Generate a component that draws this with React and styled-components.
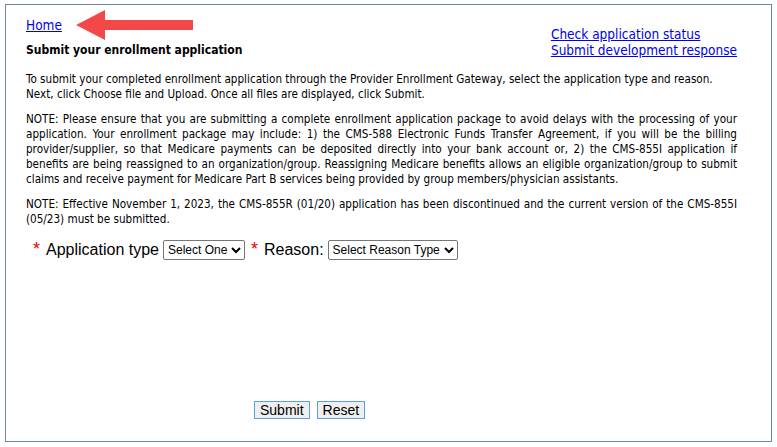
import React from 'react';
import styled, { createGlobalStyle } from 'styled-components';

const GlobalStyle = createGlobalStyle`
    body {
        margin: 0;
        background: #ffffff;
        font-family: "DejaVu Sans Condensed", "DejaVu Sans", sans-serif;
    }
`;

const Panel = styled.div`
    box-sizing: border-box;
    margin: 4px 5px 0 5px;
    height: 438px;
    border: 1px solid #6c8a9b;
    padding: 11px 34px 0 20px;
    display: flex;
    flex-direction: column;
`;

const Header = styled.div`
    display: flex;
    justify-content: space-between;
    align-items: flex-start;
`;

const LeftHead = styled.div`
    display: flex;
    flex-direction: column;
`;

const HomeRow = styled.div`
    display: flex;
    align-items: center;
    gap: 14px;
    height: 18px;
`;

const Link = styled.a`
    color: #0000ee;
    text-decoration: underline;
    font-size: 13.5px;
    line-height: 16px;
    cursor: pointer;
`;

const Title = styled.div`
    margin-top: 9px;
    font-size: 12px;
    font-weight: bold;
    color: #000;
`;

const RightLinks = styled.div`
    display: flex;
    flex-direction: column;
    margin-top: 10px;
`;

const Paragraph = styled.div`
    margin-top: ${p => p.$top}px;
    font-size: 11.6px;
    line-height: 15px;
    color: #000;
`;

const Line = styled.span`
    display: block;
    white-space: nowrap;
    text-align: justify;
    text-align-last: ${p => (p.$last ? 'left' : 'justify')};
`;

const FormRow = styled.div`
    margin-top: 12px;
    padding-left: 7px;
    display: flex;
    align-items: center;
    font-family: "Liberation Sans", Arial, sans-serif;
    font-size: 16px;
    color: #000;
`;

const Star = styled.span`
    color: #ee0000;
    font-size: 18px;
    margin-right: 6px;
`;

const Select = styled.select`
    font-family: "Liberation Sans", Arial, sans-serif;
    font-size: 12px;
    height: 20px;
    margin-left: 4px;
    margin-right: 6px;
    border: 1px solid #767676;
    border-radius: 2px;
    background: #fff;
    color: #000;
`;

const Buttons = styled.div`
    margin-top: auto;
    margin-bottom: 22px;
    padding-left: 228px;
    display: flex;
    gap: 7px;
`;

const Button = styled.button`
    font-family: "Liberation Sans", Arial, sans-serif;
    font-size: 14px;
    line-height: 16px;
    padding: 0 5px;
    background: #efefef;
    border: 1px solid #5a9fe0;
    border-radius: 0;
    color: #000;
`;

const Arrow = () => (
    <svg width="117" height="30" viewBox="0 0 117 30">
        <polygon points="0,15 29,0 29,10 117,10 117,20 29,20 29,30" fill="#f44848" />
    </svg>
);

const para1 = [
    'To submit your completed enrollment application through the Provider Enrollment Gateway, select the application type and reason.',
    'Next, click Choose file and Upload. Once all files are displayed, click Submit.',
];

const note1 = [
    'NOTE: Please ensure that you are submitting a complete enrollment application package to avoid delays with the processing of your',
    'application. Your enrollment package may include: 1) the CMS-588 Electronic Funds Transfer Agreement, if you will be the billing',
    'provider/supplier, so that Medicare payments can be deposited directly into your bank account or, 2) the CMS-855I application if',
    'benefits are being reassigned to an organization/group. Reassigning Medicare benefits allows an eligible organization/group to submit',
    'claims and receive payment for Medicare Part B services being provided by group members/physician assistants.',
];

const note2 = [
    'NOTE: Effective November 1, 2023, the CMS-855R (01/20) application has been discontinued and the current version of the CMS-855I',
    '(05/23) must be submitted.',
];

function Text({ lines, top, justify }) {
    return (
        <Paragraph $top={top}>
            {lines.map((l, i) => (
                <Line key={i} $last={!justify || i === lines.length - 1}>{l}</Line>
            ))}
        </Paragraph>
    );
}

export default function App() {
    return (
        <>
            <GlobalStyle />
            <Panel>
                <Header>
                    <LeftHead>
                        <HomeRow>
                            <Link>Home</Link>
                            <Arrow />
                        </HomeRow>
                        <Title>Submit your enrollment application</Title>
                    </LeftHead>
                    <RightLinks>
                        <Link>Check application status</Link>
                        <Link>Submit development response</Link>
                    </RightLinks>
                </Header>
                <Text lines={para1} top={14} />
                <Text lines={note1} top={10} justify />
                <Text lines={note2} top={10} justify />
                <FormRow>
                    <Star>*</Star>
                    Application type
                    <Select defaultValue="one">
                        <option value="one">Select One</option>
                    </Select>
                    <Star>*</Star>
                    Reason:
                    <Select defaultValue="r">
                        <option value="r">Select Reason Type</option>
                    </Select>
                </FormRow>
                <Buttons>
                    <Button>Submit</Button>
                    <Button>Reset</Button>
                </Buttons>
            </Panel>
        </>
    );
}
